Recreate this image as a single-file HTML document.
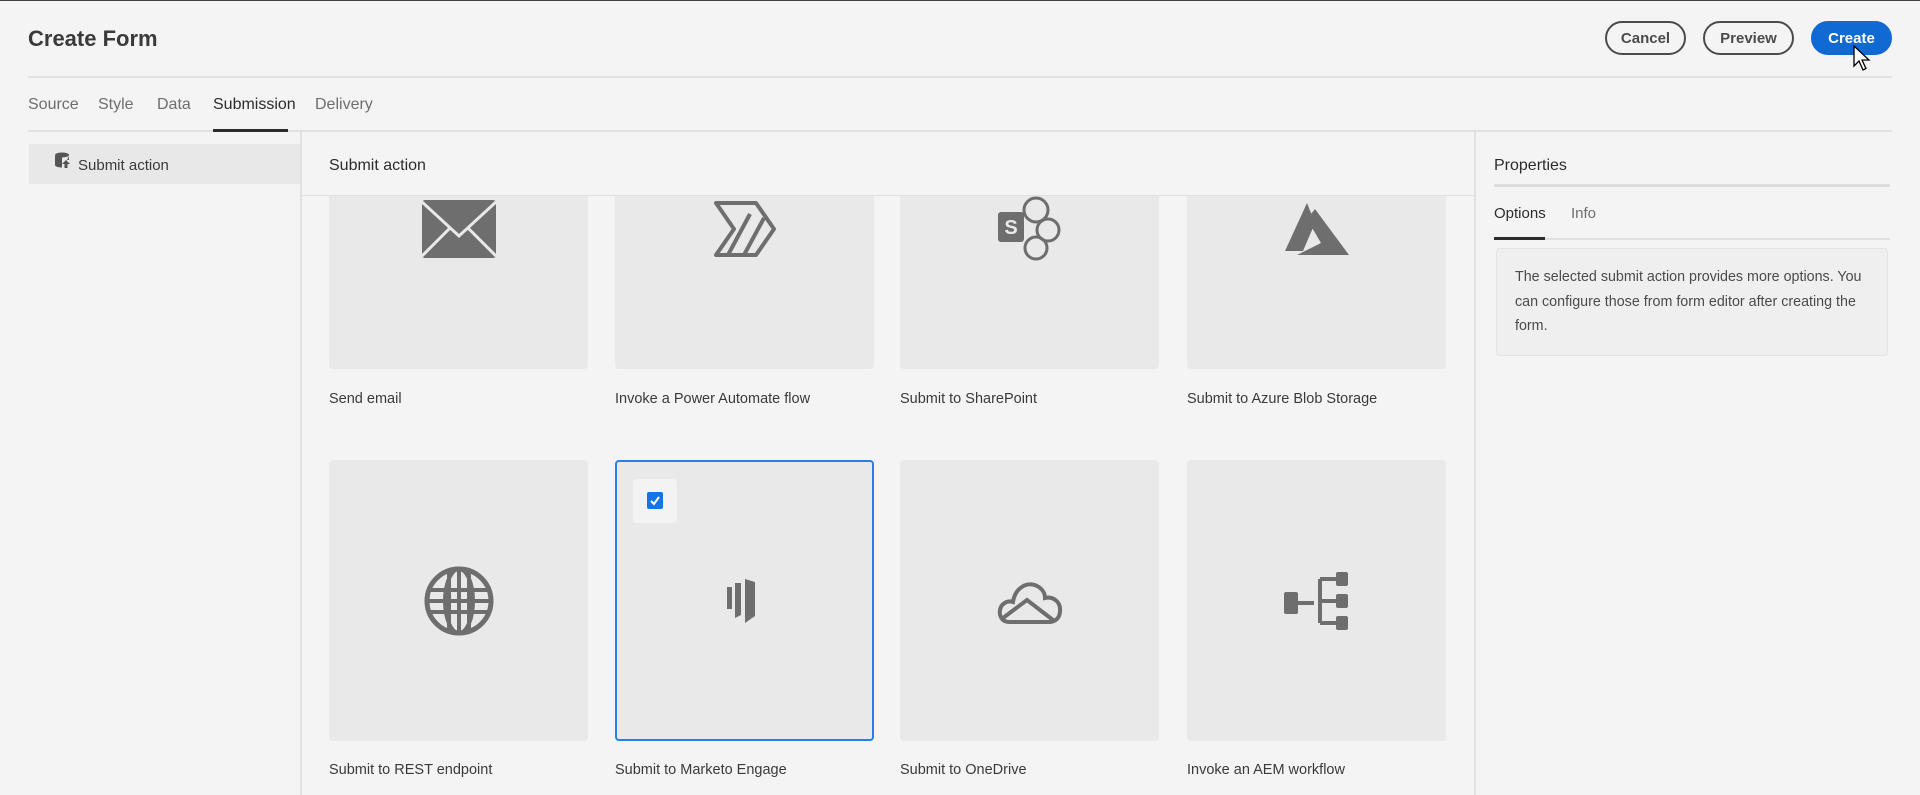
<!DOCTYPE html>
<html><head><meta charset="utf-8"><style>
*{margin:0;padding:0;box-sizing:border-box}
body{width:1920px;height:795px;background:#f4f4f4;font-family:"Liberation Sans",sans-serif;color:#2c2c2c;position:relative;overflow:hidden}
.a{position:absolute}
.btn{position:absolute;top:21px;height:34px;border-radius:17px;border:2px solid #4b4b4b;font-weight:bold;font-size:15px;color:#4b4b4b;display:flex;align-items:center;justify-content:center}
.tab{position:absolute;top:96px;font-size:16px;color:#6e6e6e}
.card{position:absolute;width:259px;height:281px;background:#e9e9e9;border-radius:4px;display:flex;align-items:center;justify-content:center}
.lbl{position:absolute;font-size:14.5px;color:#3a3a3a}
</style></head><body>
<div class="a" style="left:0;top:0;width:1920px;height:1px;background:#444"></div>
<div class="a" style="left:28px;top:26px;font-size:22px;font-weight:bold;color:#3a3a3a">Create Form</div>
<div class="btn" style="left:1605px;width:81px">Cancel</div>
<div class="btn" style="left:1703px;width:91px">Preview</div>
<div class="btn" style="left:1811px;width:81px;background:#1169d3;border-color:#1169d3;color:#fff">Create</div>
<svg class="a" style="left:1853px;top:45px" width="20" height="28" viewBox="0 0 20 28"><path d="M1 1 L1 21 L6 16 L10 25 L13 23.5 L9 15 L16 15 Z" fill="#fff" stroke="#000" stroke-width="1.3"/></svg>
<div class="a" style="left:28px;top:76px;width:1864px;height:2px;background:#e1e1e1"></div>
<div class="tab" style="left:28px">Source</div>
<div class="tab" style="left:98px">Style</div>
<div class="tab" style="left:157px">Data</div>
<div class="tab" style="left:213px;color:#2c2c2c">Submission</div>
<div class="tab" style="left:315px">Delivery</div>
<div class="a" style="left:28px;top:130px;width:1864px;height:2px;background:#e1e1e1"></div>
<div class="a" style="left:213px;top:129px;width:75px;height:3px;background:#2c2c2c"></div>
<div class="a" style="left:29px;top:144px;width:272px;height:40px;background:#e8e8e8"></div>
<svg class="a" style="left:54px;top:152px" width="18" height="18" viewBox="0 0 18 18"><ellipse cx="8" cy="3" rx="7" ry="2.5" fill="#555"/><path d="M1 4v9c0 1.4 3 2.5 7 2.5V4.5C4 4.5 1 4 1 4zM15 4v4h-2z" fill="#555"/><path d="M12 8l-4 4h2.5v4h3v-4H16z" fill="#555"/></svg>
<div class="a" style="left:78px;top:157px;font-size:15px;color:#3a3a3a">Submit action</div>
<div class="a" style="left:300px;top:132px;width:2px;height:663px;background:#e1e1e1"></div>
<div class="a" style="left:1474px;top:132px;width:2px;height:663px;background:#e1e1e1"></div>
<div class="a" style="left:329px;top:157px;font-size:16px;color:#2c2c2c">Submit action</div>
<div class="a" style="left:302px;top:195px;width:1172px;height:1px;background:#e1e1e1"></div>
<div class="a" style="left:302px;top:196px;width:1172px;height:599px;overflow:hidden">
 <div style="position:absolute;left:-302px;top:-196px;width:1920px;height:795px">
  <div class="card" style="left:329px;top:88px"><svg width="74" height="58" viewBox="0 0 74 58"><rect x="0" y="0" width="74" height="58" rx="3" fill="#6e6e6e"/><path d="M0 2L37 36L74 2M0 56L28 28M74 56L46 28" stroke="#e9e9e9" stroke-width="3" fill="none"/></svg></div>
  <div class="card" style="left:615px;top:88px"><svg width="66" height="58" viewBox="0 0 66 58"><path d="M4 3H44L62 29L44 55H4L22 29Z" fill="none" stroke="#6e6e6e" stroke-width="4" stroke-linejoin="round"/><path d="M16 55L38 14M32 55L52 18" fill="none" stroke="#6e6e6e" stroke-width="4"/></svg></div>
  <div class="card" style="left:900px;top:88px"><svg width="64" height="66" viewBox="0 0 64 66"><circle cx="38" cy="14" r="12" fill="none" stroke="#6e6e6e" stroke-width="3"/><circle cx="50" cy="34" r="11" fill="none" stroke="#6e6e6e" stroke-width="3"/><circle cx="38" cy="52" r="11" fill="none" stroke="#6e6e6e" stroke-width="3"/><rect x="0" y="16" width="26" height="30" rx="3" fill="#6e6e6e"/><text x="13" y="38" font-size="20" font-weight="bold" fill="#e9e9e9" text-anchor="middle" font-family="Liberation Sans">S</text></svg></div>
  <div class="card" style="left:1187px;top:88px"><svg width="64" height="52" viewBox="0 0 64 52"><path d="M22 0L0 48H18L30 20Z" fill="#6e6e6e"/><path d="M30 6L64 52H12L36 40L22 16Z" fill="#6e6e6e"/></svg></div>
  <div class="lbl" style="left:329px;top:391px">Send email</div>
  <div class="lbl" style="left:615px;top:391px">Invoke a Power Automate flow</div>
  <div class="lbl" style="left:900px;top:391px">Submit to SharePoint</div>
  <div class="lbl" style="left:1187px;top:391px">Submit to Azure Blob Storage</div>
  <div class="card" style="left:329px;top:460px"><svg width="70" height="70" viewBox="0 0 70 70"><circle cx="35" cy="35" r="32" fill="none" stroke="#6e6e6e" stroke-width="5"/><ellipse cx="35" cy="35" rx="14" ry="32" fill="none" stroke="#6e6e6e" stroke-width="4"/><path d="M35 3V67M5 24H65M3 35H67M5 46H65M25 6V64M45 6V64" stroke="#6e6e6e" stroke-width="4"/></svg></div>
  <div class="card" style="left:615px;top:460px;border:2px solid #2680eb"><div style="position:absolute;left:16px;top:17px;width:44px;height:44px;background:#f3f3f3;border-radius:4px"><div style="position:absolute;left:14px;top:13px;width:16px;height:17px;background:#1473e6;border-radius:2px"><svg width="16" height="17" viewBox="0 0 16 17"><path d="M4 9l3 3 5-7" stroke="#fff" stroke-width="2" fill="none"/></svg></div></div><svg width="40" height="44" viewBox="0 0 40 44"><path d="M2 8h5v22h-5z M10 4h6v32l-6 3z M20 0l10 3v34l-10 7z" fill="#6e6e6e"/></svg></div>
  <div class="card" style="left:900px;top:460px"><svg width="66" height="46" viewBox="0 0 66 46"><path d="M12 44C4 44 2 36 3 32C4 26 10 22 16 24C18 10 30 3 40 8C46 11 48 16 48 20C56 18 64 24 63 33C63 40 58 44 52 44Z" fill="none" stroke="#6e6e6e" stroke-width="4"/><path d="M6 40L30 22L56 42" fill="none" stroke="#6e6e6e" stroke-width="4"/></svg></div>
  <div class="card" style="left:1187px;top:460px"><svg width="66" height="58" viewBox="0 0 66 58"><rect x="0" y="20" width="14" height="22" rx="2" fill="#6e6e6e"/><rect x="52" y="0" width="12" height="14" rx="2" fill="#6e6e6e"/><rect x="52" y="22" width="12" height="14" rx="2" fill="#6e6e6e"/><rect x="52" y="44" width="12" height="14" rx="2" fill="#6e6e6e"/><path d="M14 31H30M36 7V51M36 7H52M36 29H52M36 51H52" stroke="#6e6e6e" stroke-width="4" fill="none"/></svg></div>
  <div class="lbl" style="left:329px;top:762px">Submit to REST endpoint</div>
  <div class="lbl" style="left:615px;top:762px">Submit to Marketo Engage</div>
  <div class="lbl" style="left:900px;top:762px">Submit to OneDrive</div>
  <div class="lbl" style="left:1187px;top:762px">Invoke an AEM workflow</div>
 </div>
</div>
<div class="a" style="left:1494px;top:157px;font-size:16px;color:#2c2c2c">Properties</div>
<div class="a" style="left:1494px;top:184px;width:396px;height:3px;background:#dcdcdc"></div>
<div class="a" style="left:1494px;top:205px;font-size:15px;color:#2c2c2c">Options</div>
<div class="a" style="left:1571px;top:205px;font-size:15px;color:#6e6e6e">Info</div>
<div class="a" style="left:1494px;top:238px;width:396px;height:2px;background:#e1e1e1"></div>
<div class="a" style="left:1494px;top:237px;width:51px;height:3px;background:#2c2c2c"></div>
<div class="a" style="left:1496px;top:248px;width:392px;height:108px;background:#efefef;border:1px solid #e4e4e4;border-radius:4px;padding:16px 18px;font-size:14.3px;line-height:24.5px;color:#4b4b4b">The selected submit action provides more options. You can configure those from form editor after creating the form.</div>
</body></html>
